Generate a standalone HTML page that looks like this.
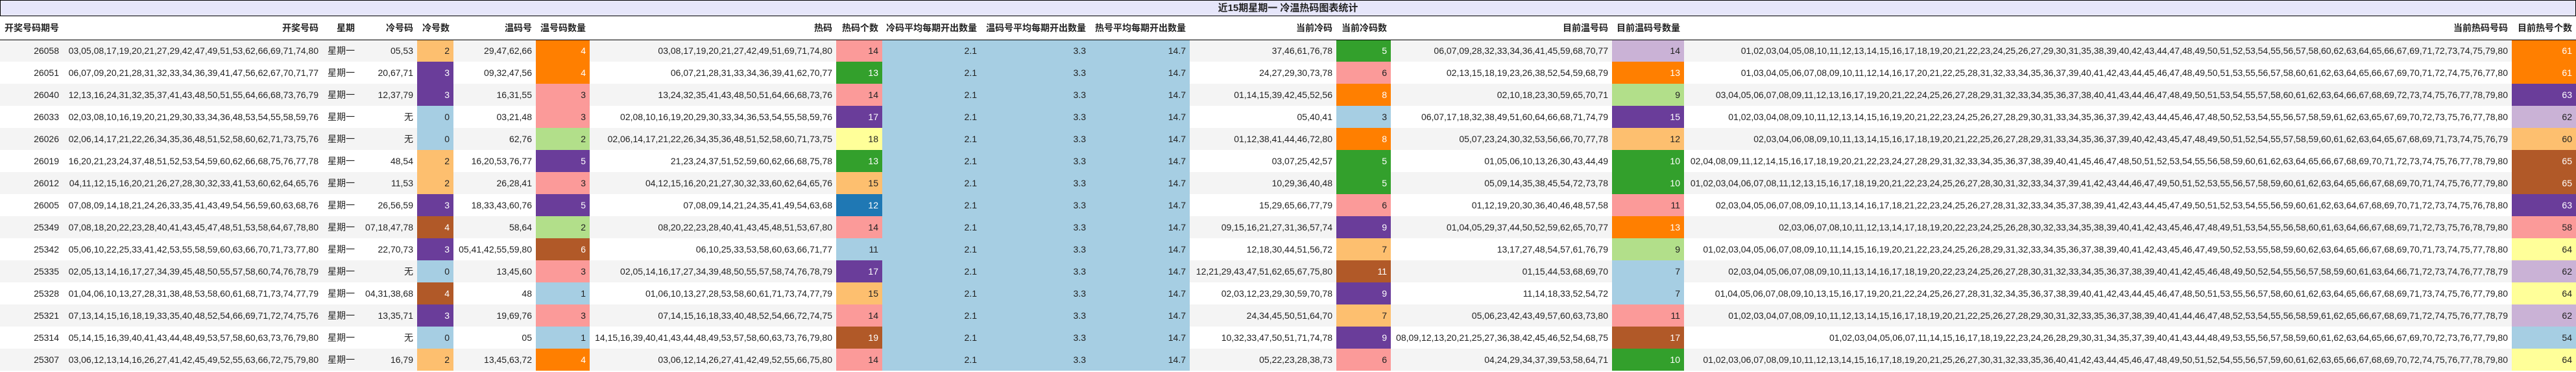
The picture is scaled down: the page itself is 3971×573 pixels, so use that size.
<!DOCTYPE html>
<html><head><meta charset="utf-8"><style>
*{margin:0;padding:0;box-sizing:border-box}
html,body{width:3971px;height:573px;background:#fff;overflow:hidden}
body{font-family:"Liberation Sans","Noto Sans CJK SC",sans-serif;font-size:14px;color:#222}
.title{height:25px;background:#e6e6fa;border:1px solid #000;text-align:center;font-weight:bold;font-size:15px;line-height:23px;padding-left:0}
table{border-collapse:collapse;table-layout:fixed;width:3971px}
td,th{white-space:nowrap;overflow:hidden;text-align:right;padding:0 6px 0 0;height:34px}
th{height:36px;font-weight:bold;border-bottom:1px solid #000}
tr.o td{background:#f4f4f4}
tr td.lb{background:#a6cee3}
tr td.b{background:#1f78b4;color:#fff}
tr td.lg{background:#b2df8a}
tr td.g{background:#33a02c;color:#fff}
tr td.p{background:#fb9a99}
tr td.lo{background:#fdbf6f}
tr td.or{background:#ff7f00;color:#fff}
tr td.lp{background:#cab2d6}
tr td.pu{background:#6a3d9a;color:#fff}
tr td.y{background:#ffff99}
tr td.br{background:#b15928;color:#fff}
</style></head><body>
<div class="title">近15期星期一 冷温热码图表统计</div>
<table>
<colgroup><col style="width:97px"><col style="width:400px"><col style="width:56px"><col style="width:90px"><col style="width:56px"><col style="width:127px"><col style="width:83px"><col style="width:380px"><col style="width:71px"><col style="width:152px"><col style="width:168px"><col style="width:154px"><col style="width:226px"><col style="width:84px"><col style="width:341px"><col style="width:111px"><col style="width:1276px"><col style="width:99px"></colgroup>
<tr><th>开奖号码期号</th><th>开奖号码</th><th>星期</th><th>冷号码</th><th>冷号数</th><th>温码号</th><th>温号码数量</th><th>热码</th><th>热码个数</th><th>冷码平均每期开出数量</th><th>温码号平均每期开出数量</th><th>热号平均每期开出数量</th><th>当前冷码</th><th>当前冷码数</th><th>目前温号码</th><th>目前温码号数量</th><th>当前热码号码</th><th>目前热号个数</th></tr>
<tr class="o"><td>26058</td><td>03,05,08,17,19,20,21,27,29,42,47,49,51,53,62,66,69,71,74,80</td><td>星期一</td><td>05,53</td><td class="lo">2</td><td>29,47,62,66</td><td class="or">4</td><td>03,08,17,19,20,21,27,42,49,51,69,71,74,80</td><td class="p">14</td><td class="lb">2.1</td><td class="lb">3.3</td><td class="lb">14.7</td><td>37,46,61,76,78</td><td class="g">5</td><td>06,07,09,28,32,33,34,36,41,45,59,68,70,77</td><td class="lp">14</td><td>01,02,03,04,05,08,10,11,12,13,14,15,16,17,18,19,20,21,22,23,24,25,26,27,29,30,31,35,38,39,40,42,43,44,47,48,49,50,51,52,53,54,55,56,57,58,60,62,63,64,65,66,67,69,71,72,73,74,75,79,80</td><td class="or">61</td></tr>
<tr><td>26051</td><td>06,07,09,20,21,28,31,32,33,34,36,39,41,47,56,62,67,70,71,77</td><td>星期一</td><td>20,67,71</td><td class="pu">3</td><td>09,32,47,56</td><td class="or">4</td><td>06,07,21,28,31,33,34,36,39,41,62,70,77</td><td class="g">13</td><td class="lb">2.1</td><td class="lb">3.3</td><td class="lb">14.7</td><td>24,27,29,30,73,78</td><td class="p">6</td><td>02,13,15,18,19,23,26,38,52,54,59,68,79</td><td class="or">13</td><td>01,03,04,05,06,07,08,09,10,11,12,14,16,17,20,21,22,25,28,31,32,33,34,35,36,37,39,40,41,42,43,44,45,46,47,48,49,50,51,53,55,56,57,58,60,61,62,63,64,65,66,67,69,70,71,72,74,75,76,77,80</td><td class="or">61</td></tr>
<tr class="o"><td>26040</td><td>12,13,16,24,31,32,35,37,41,43,48,50,51,55,64,66,68,73,76,79</td><td>星期一</td><td>12,37,79</td><td class="pu">3</td><td>16,31,55</td><td class="p">3</td><td>13,24,32,35,41,43,48,50,51,64,66,68,73,76</td><td class="p">14</td><td class="lb">2.1</td><td class="lb">3.3</td><td class="lb">14.7</td><td>01,14,15,39,42,45,52,56</td><td class="or">8</td><td>02,10,18,23,30,59,65,70,71</td><td class="lg">9</td><td>03,04,05,06,07,08,09,11,12,13,16,17,19,20,21,22,24,25,26,27,28,29,31,32,33,34,35,36,37,38,40,41,43,44,46,47,48,49,50,51,53,54,55,57,58,60,61,62,63,64,66,67,68,69,72,73,74,75,76,77,78,79,80</td><td class="pu">63</td></tr>
<tr><td>26033</td><td>02,03,08,10,16,19,20,21,29,30,33,34,36,48,53,54,55,58,59,76</td><td>星期一</td><td>无</td><td class="lb">0</td><td>03,21,48</td><td class="p">3</td><td>02,08,10,16,19,20,29,30,33,34,36,53,54,55,58,59,76</td><td class="pu">17</td><td class="lb">2.1</td><td class="lb">3.3</td><td class="lb">14.7</td><td>05,40,41</td><td class="lb">3</td><td>06,07,17,18,32,38,49,51,60,64,66,68,71,74,79</td><td class="pu">15</td><td>01,02,03,04,08,09,10,11,12,13,14,15,16,19,20,21,22,23,24,25,26,27,28,29,30,31,33,34,35,36,37,39,42,43,44,45,46,47,48,50,52,53,54,55,56,57,58,59,61,62,63,65,67,69,70,72,73,75,76,77,78,80</td><td class="lp">62</td></tr>
<tr class="o"><td>26026</td><td>02,06,14,17,21,22,26,34,35,36,48,51,52,58,60,62,71,73,75,76</td><td>星期一</td><td>无</td><td class="lb">0</td><td>62,76</td><td class="lg">2</td><td>02,06,14,17,21,22,26,34,35,36,48,51,52,58,60,71,73,75</td><td class="y">18</td><td class="lb">2.1</td><td class="lb">3.3</td><td class="lb">14.7</td><td>01,12,38,41,44,46,72,80</td><td class="or">8</td><td>05,07,23,24,30,32,53,56,66,70,77,78</td><td class="lo">12</td><td>02,03,04,06,08,09,10,11,13,14,15,16,17,18,19,20,21,22,25,26,27,28,29,31,33,34,35,36,37,39,40,42,43,45,47,48,49,50,51,52,54,55,57,58,59,60,61,62,63,64,65,67,68,69,71,73,74,75,76,79</td><td class="lo">60</td></tr>
<tr><td>26019</td><td>16,20,21,23,24,37,48,51,52,53,54,59,60,62,66,68,75,76,77,78</td><td>星期一</td><td>48,54</td><td class="lo">2</td><td>16,20,53,76,77</td><td class="pu">5</td><td>21,23,24,37,51,52,59,60,62,66,68,75,78</td><td class="g">13</td><td class="lb">2.1</td><td class="lb">3.3</td><td class="lb">14.7</td><td>03,07,25,42,57</td><td class="g">5</td><td>01,05,06,10,13,26,30,43,44,49</td><td class="g">10</td><td>02,04,08,09,11,12,14,15,16,17,18,19,20,21,22,23,24,27,28,29,31,32,33,34,35,36,37,38,39,40,41,45,46,47,48,50,51,52,53,54,55,56,58,59,60,61,62,63,64,65,66,67,68,69,70,71,72,73,74,75,76,77,78,79,80</td><td class="br">65</td></tr>
<tr class="o"><td>26012</td><td>04,11,12,15,16,20,21,26,27,28,30,32,33,41,53,60,62,64,65,76</td><td>星期一</td><td>11,53</td><td class="lo">2</td><td>26,28,41</td><td class="p">3</td><td>04,12,15,16,20,21,27,30,32,33,60,62,64,65,76</td><td class="lo">15</td><td class="lb">2.1</td><td class="lb">3.3</td><td class="lb">14.7</td><td>10,29,36,40,48</td><td class="g">5</td><td>05,09,14,35,38,45,54,72,73,78</td><td class="g">10</td><td>01,02,03,04,06,07,08,11,12,13,15,16,17,18,19,20,21,22,23,24,25,26,27,28,30,31,32,33,34,37,39,41,42,43,44,46,47,49,50,51,52,53,55,56,57,58,59,60,61,62,63,64,65,66,67,68,69,70,71,74,75,76,77,79,80</td><td class="br">65</td></tr>
<tr><td>26005</td><td>07,08,09,14,18,21,24,26,33,35,41,43,49,54,56,59,60,63,68,76</td><td>星期一</td><td>26,56,59</td><td class="pu">3</td><td>18,33,43,60,76</td><td class="pu">5</td><td>07,08,09,14,21,24,35,41,49,54,63,68</td><td class="b">12</td><td class="lb">2.1</td><td class="lb">3.3</td><td class="lb">14.7</td><td>15,29,65,66,77,79</td><td class="p">6</td><td>01,12,19,20,30,36,40,46,48,57,58</td><td class="p">11</td><td>02,03,04,05,06,07,08,09,10,11,13,14,16,17,18,21,22,23,24,25,26,27,28,31,32,33,34,35,37,38,39,41,42,43,44,45,47,49,50,51,52,53,54,55,56,59,60,61,62,63,64,67,68,69,70,71,72,73,74,75,76,78,80</td><td class="pu">63</td></tr>
<tr class="o"><td>25349</td><td>07,08,18,20,22,23,28,40,41,43,45,47,48,51,53,58,64,67,78,80</td><td>星期一</td><td>07,18,47,78</td><td class="br">4</td><td>58,64</td><td class="lg">2</td><td>08,20,22,23,28,40,41,43,45,48,51,53,67,80</td><td class="p">14</td><td class="lb">2.1</td><td class="lb">3.3</td><td class="lb">14.7</td><td>09,15,16,21,27,31,36,57,74</td><td class="pu">9</td><td>01,04,05,29,37,44,50,52,59,62,65,70,77</td><td class="or">13</td><td>02,03,06,07,08,10,11,12,13,14,17,18,19,20,22,23,24,25,26,28,30,32,33,34,35,38,39,40,41,42,43,45,46,47,48,49,51,53,54,55,56,58,60,61,63,64,66,67,68,69,71,72,73,75,76,78,79,80</td><td class="p">58</td></tr>
<tr><td>25342</td><td>05,06,10,22,25,33,41,42,53,55,58,59,60,63,66,70,71,73,77,80</td><td>星期一</td><td>22,70,73</td><td class="pu">3</td><td>05,41,42,55,59,80</td><td class="br">6</td><td>06,10,25,33,53,58,60,63,66,71,77</td><td class="lb">11</td><td class="lb">2.1</td><td class="lb">3.3</td><td class="lb">14.7</td><td>12,18,30,44,51,56,72</td><td class="lo">7</td><td>13,17,27,48,54,57,61,76,79</td><td class="lg">9</td><td>01,02,03,04,05,06,07,08,09,10,11,14,15,16,19,20,21,22,23,24,25,26,28,29,31,32,33,34,35,36,37,38,39,40,41,42,43,45,46,47,49,50,52,53,55,58,59,60,62,63,64,65,66,67,68,69,70,71,73,74,75,77,78,80</td><td class="y">64</td></tr>
<tr class="o"><td>25335</td><td>02,05,13,14,16,17,27,34,39,45,48,50,55,57,58,60,74,76,78,79</td><td>星期一</td><td>无</td><td class="lb">0</td><td>13,45,60</td><td class="p">3</td><td>02,05,14,16,17,27,34,39,48,50,55,57,58,74,76,78,79</td><td class="pu">17</td><td class="lb">2.1</td><td class="lb">3.3</td><td class="lb">14.7</td><td>12,21,29,43,47,51,62,65,67,75,80</td><td class="br">11</td><td>01,15,44,53,68,69,70</td><td class="lb">7</td><td>02,03,04,05,06,07,08,09,10,11,13,14,16,17,18,19,20,22,23,24,25,26,27,28,30,31,32,33,34,35,36,37,38,39,40,41,42,45,46,48,49,50,52,54,55,56,57,58,59,60,61,63,64,66,71,72,73,74,76,77,78,79</td><td class="lp">62</td></tr>
<tr><td>25328</td><td>01,04,06,10,13,27,28,31,38,48,53,58,60,61,68,71,73,74,77,79</td><td>星期一</td><td>04,31,38,68</td><td class="br">4</td><td>48</td><td class="lb">1</td><td>01,06,10,13,27,28,53,58,60,61,71,73,74,77,79</td><td class="lo">15</td><td class="lb">2.1</td><td class="lb">3.3</td><td class="lb">14.7</td><td>02,03,12,23,29,30,59,70,78</td><td class="pu">9</td><td>11,14,18,33,52,54,72</td><td class="lb">7</td><td>01,04,05,06,07,08,09,10,13,15,16,17,19,20,21,22,24,25,26,27,28,31,32,34,35,36,37,38,39,40,41,42,43,44,45,46,47,48,50,51,53,55,56,57,58,60,61,62,63,64,65,66,67,68,69,71,73,74,75,76,77,79,80</td><td class="y">64</td></tr>
<tr class="o"><td>25321</td><td>07,13,14,15,16,18,19,33,35,40,48,52,54,66,69,71,72,74,75,76</td><td>星期一</td><td>13,35,71</td><td class="pu">3</td><td>19,69,76</td><td class="p">3</td><td>07,14,15,16,18,33,40,48,52,54,66,72,74,75</td><td class="p">14</td><td class="lb">2.1</td><td class="lb">3.3</td><td class="lb">14.7</td><td>24,34,45,50,51,64,70</td><td class="lo">7</td><td>05,06,23,42,43,49,57,60,63,73,80</td><td class="p">11</td><td>01,02,03,04,07,08,09,10,11,12,13,14,15,16,17,18,19,20,21,22,25,26,27,28,29,30,31,32,33,35,36,37,38,39,40,41,44,46,47,48,52,53,54,55,56,58,59,61,62,65,66,67,68,69,71,72,74,75,76,77,78,79</td><td class="lp">62</td></tr>
<tr><td>25314</td><td>05,14,15,16,39,40,41,43,44,48,49,53,57,58,60,63,73,76,79,80</td><td>星期一</td><td>无</td><td class="lb">0</td><td>05</td><td class="lb">1</td><td>14,15,16,39,40,41,43,44,48,49,53,57,58,60,63,73,76,79,80</td><td class="br">19</td><td class="lb">2.1</td><td class="lb">3.3</td><td class="lb">14.7</td><td>10,32,33,47,50,51,71,74,78</td><td class="pu">9</td><td>08,09,12,13,20,21,25,27,36,38,42,45,46,52,54,68,75</td><td class="br">17</td><td>01,02,03,04,05,06,07,11,14,15,16,17,18,19,22,23,24,26,28,29,30,31,34,35,37,39,40,41,43,44,48,49,53,55,56,57,58,59,60,61,62,63,64,65,66,67,69,70,72,73,76,77,79,80</td><td class="lb">54</td></tr>
<tr class="o"><td>25307</td><td>03,06,12,13,14,16,26,27,41,42,45,49,52,55,63,66,72,75,79,80</td><td>星期一</td><td>16,79</td><td class="lo">2</td><td>13,45,63,72</td><td class="or">4</td><td>03,06,12,14,26,27,41,42,49,52,55,66,75,80</td><td class="p">14</td><td class="lb">2.1</td><td class="lb">3.3</td><td class="lb">14.7</td><td>05,22,23,28,38,73</td><td class="p">6</td><td>04,24,29,34,37,39,53,58,64,71</td><td class="g">10</td><td>01,02,03,06,07,08,09,10,11,12,13,14,15,16,17,18,19,20,21,25,26,27,30,31,32,33,35,36,40,41,42,43,44,45,46,47,48,49,50,51,52,54,55,56,57,59,60,61,62,63,65,66,67,68,69,70,72,74,75,76,77,78,79,80</td><td class="y">64</td></tr>
</table>
</body></html>
